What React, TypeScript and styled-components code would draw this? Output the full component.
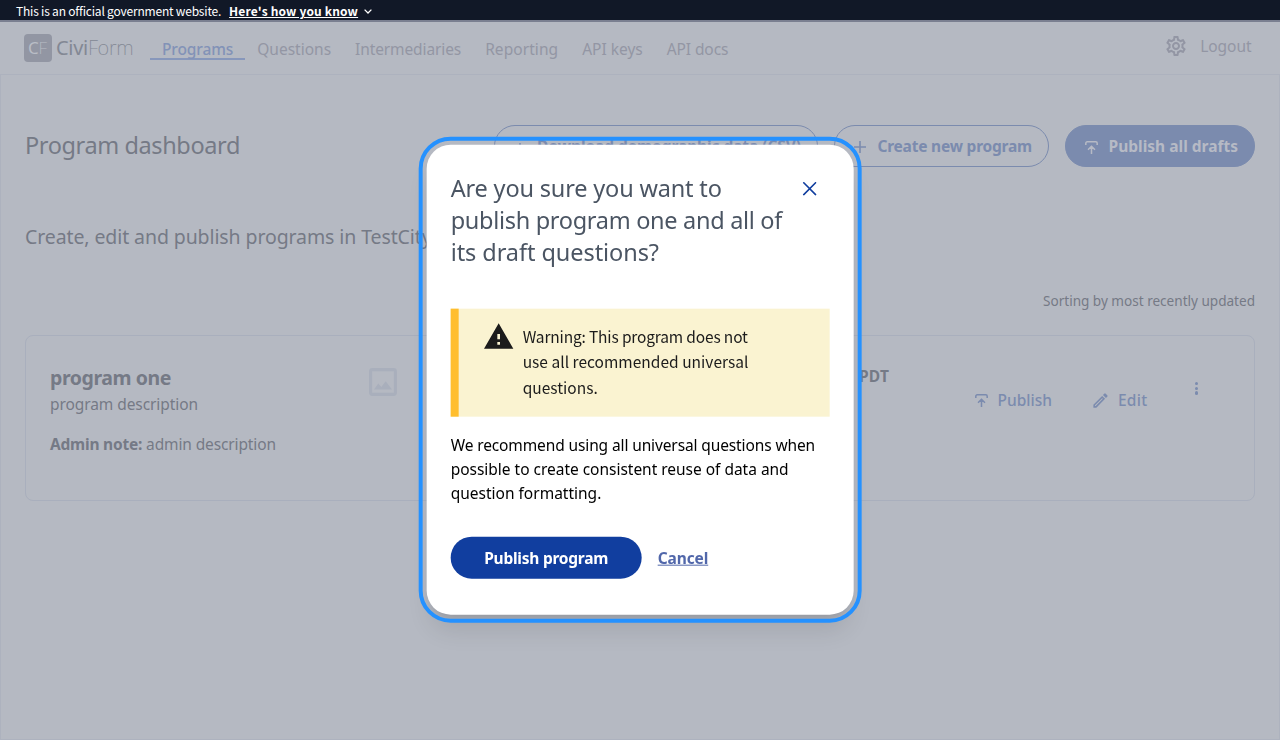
import React from 'react';
import styled, { createGlobalStyle } from 'styled-components';
import { MdOutlineEdit, MdOutlineSettings, MdWarning } from 'react-icons/md';

const GlobalStyle = createGlobalStyle`
  *, *::before, *::after { box-sizing: border-box; }
  body {
    margin: 0;
    background: #b5b9c2;
    font-family: 'Noto Sans', 'Open Sans', sans-serif;
    font-size: 15.5px;
    line-height: 24px;
  }
  h1, h2, h3, p { margin: 0; font-weight: 400; }
`;

const color = {
  muted: '#757a86',
  nav: '#9396a4',
  blue: '#7b8bae',
  line: '#a9afbd',
};

const Page = styled.div`
  display: flex;
  flex-direction: column;
  height: 740px;
  overflow: hidden;
`;

/* Letter spacing is tuned per string. */
const Text = styled.span<{ $ls?: number }>`
  letter-spacing: ${p => p.$ls ?? 0}px;
  white-space: nowrap;
`;

const Banner = styled.div`
  display: flex;
  align-items: center;
  height: 22px;
  padding: 2px 16px 0;
  border-bottom: 2px solid #7a7f90;
  background: #111827;
  color: #fff;
  font-family: 'Noto Sans CJK SC', sans-serif;
  font-size: 12px;
  line-height: 18px;
`;

const BannerLink = styled(Text)`
  margin: 0 6px 0 8px;
  font-weight: 700;
  text-decoration: underline;
  text-underline-offset: 1px;
  text-decoration-thickness: 1px;
`;

const Header = styled.header`
  display: flex;
  flex: none;
  height: 52px;
  padding: 0 28.5px 0 24px;
`;

const LogoMark = styled.div`
  width: 28px;
  height: 28px;
  margin-top: 12px;
  padding-left: 4px;
  border-radius: 4px;
  background: #9296a3;
  color: #b9bdc6;
  font-size: 17px;
  line-height: 28px;
  letter-spacing: -0.2px;
  white-space: nowrap;
`;

const LogoName = styled.div`
  width: 98px;
  margin-top: 12px;
  padding-left: 4px;
  color: #838894;
  font-size: 20px;
  line-height: 28px;
  white-space: nowrap;
`;

const Thin = styled.span<{ $weight: number; $ls: number }>`
  font-weight: ${p => p.$weight};
  letter-spacing: ${p => p.$ls}px;
`;

const Nav = styled.nav`
  display: flex;
  flex: 1;
  align-items: flex-start;
  padding-top: 18px;
`;

const NavItem = styled.a<{ $active?: boolean }>`
  height: 20px;
  padding: 0 12px;
  border-bottom: 2px solid ${p => (p.$active ? '#8797bb' : 'transparent')};
  color: ${p => (p.$active ? '#8292b7' : color.nav)};
  font-weight: ${p => (p.$active ? 500 : 400)};
  line-height: 18px;
`;

const HeaderTools = styled.div`
  display: flex;
  align-items: center;
  gap: 12px;
  height: 24px;
  margin-top: 12px;
  color: ${color.nav};
`;

const Main = styled.main`
  flex: 1;
  padding: 50px 24px 0;
  border: 1px solid #adb2be;
  color: ${color.muted};
`;

const TitleRow = styled.div`
  display: flex;
  align-items: center;
  gap: 16px;
`;

const PageTitle = styled.h1`
  flex: 1;
  height: 42px;
  font-size: 23.5px;
  line-height: 40px;
`;

const PillButton = styled.button<{ $filled?: boolean; $width: number }>`
  display: flex;
  align-items: center;
  justify-content: space-between;
  width: ${p => p.$width}px;
  height: 42px;
  padding: 0 16px;
  border: 1px solid ${color.blue};
  border-radius: 21px;
  background: ${p => (p.$filled ? color.blue : 'transparent')};
  color: ${p => (p.$filled ? '#b6bac5' : color.blue)};
  font: inherit;
  font-weight: 700;
`;

const IconBox = styled.span`
  display: flex;
  justify-content: center;
  width: 18px;
  padding-top: 2px;
`;

const Subtitle = styled.h2`
  margin-top: 56px;
  font-size: 19.5px;
  line-height: 28px;
`;

const SortNote = styled.p`
  margin-top: 40px;
  font-size: 13.6px;
  line-height: 20px;
  text-align: right;
`;

const Card = styled.section`
  display: flex;
  align-items: flex-start;
  height: 166px;
  margin-top: 24px;
  padding: 27px 24px 0;
  border: 1px solid ${color.line};
  border-radius: 8px;
`;

const CardText = styled.div`
  width: 319px;
  padding-top: 1px;
`;

const CardTitle = styled.h3`
  font-size: 19.5px;
  font-weight: 700;
  line-height: 28px;
`;

const Note = styled.p`
  margin-top: 16px;
`;

const Thumb = styled.div`
  height: 28px;
  margin-top: 5px;
`;

const Updated = styled.div`
  width: 492px;
  margin-top: 1px;
  font-weight: 700;
  text-align: right;
`;

const Actions = styled.div`
  display: flex;
  align-items: center;
  gap: 39.5px;
  margin: 25px 0 0 85.5px;
`;

const Action = styled.a<{ $gap: number }>`
  display: flex;
  align-items: center;
  gap: ${p => p.$gap}px;
  color: ${color.blue};
  font-weight: 500;
`;

const More = styled.div`
  display: flex;
  flex-direction: column;
  gap: 1.5px;
  margin: 19px 0 0 47.5px;
`;

const Dot = styled.span`
  width: 3.2px;
  height: 3.2px;
  border-radius: 50%;
  background: ${color.blue};
`;

const Overlay = styled.div`
  position: fixed;
  inset: 0;
  display: flex;
  justify-content: center;
  align-items: flex-start;
  padding: 145px 0 0 1px;
`;

const Dialog = styled.div`
  width: 427px;
  height: 470px;
  padding: 27px 24px 0;
  border-radius: 24px;
  outline: 4px solid #2491ff;
  outline-offset: 4px;
  background: #fff;
  box-shadow: 0 20px 25px -5px rgba(0, 0, 0, 0.1), 0 8px 10px -6px rgba(0, 0, 0, 0.1);
  transform: translate(-0.33px, -0.33px);
`;

const DialogHead = styled.div`
  display: flex;
  justify-content: space-between;
  padding-right: 13px;
`;

const DialogTitle = styled.h2`
  display: flex;
  flex-direction: column;
  color: #4b5563;
  font-size: 23.5px;
  line-height: 32px;
`;

const Close = styled.svg`
  width: 14px;
  height: 14px;
  margin-top: 10px;
`;

const Alert = styled.div`
  display: flex;
  gap: 8px;
  height: 108px;
  margin-top: 41px;
  padding: 15px 24px 0;
  border-left: 8px solid #ffbe2e;
  background: #faf3d1;
  color: #1b1b1b;
`;

const AlertIcon = styled(MdWarning)`
  flex: none;
  width: 32px;
  height: 32px;
  margin-top: -3px;
`;

const AlertText = styled.p`
  display: flex;
  flex-direction: column;
  font-family: 'Noto Sans CJK SC', sans-serif;
  line-height: 25.4px;
`;

const Body = styled.p`
  display: flex;
  flex-direction: column;
  margin-top: 16px;
  color: #000;
`;

const DialogActions = styled.div`
  display: flex;
  align-items: center;
  gap: 16px;
  margin-top: 32px;
`;

const Primary = styled.button`
  width: 191px;
  height: 42px;
  padding: 0;
  border: 0;
  border-radius: 21px;
  background: #113e9f;
  color: #fff;
  font: inherit;
  font-weight: 700;
`;

const Cancel = styled.a`
  color: #5167aa;
  font-weight: 700;
  text-decoration: underline;
  text-underline-offset: 1px;
  text-decoration-thickness: 1px;
`;

const PublishIcon = () => (
  <svg width="13" height="13" viewBox="0 0 12 12" fill="none" stroke="currentColor" strokeWidth="1.4">
    <path d="M.75 3.7V2A1.25 1.25 0 0 1 2 .75h8A1.25 1.25 0 0 1 11.25 2v1.7M6 12V5M2.8 8.1 6 4.9l3.2 3.2" />
  </svg>
);

const PlusIcon = () => (
  <svg width="12" height="12" viewBox="0 0 12 12" stroke="currentColor" strokeWidth="1.6">
    <path d="M6 0v12M0 6h12" />
  </svg>
);

const DownloadIcon = () => (
  <svg width="12" height="12" viewBox="0 0 12 12" fill="none" stroke="currentColor" strokeWidth="1.5">
    <path d="M6 2v6M3.5 5.5 6 8l2.5-2.5M.75 8.5v2.75h10.5V8.5" />
  </svg>
);

const ImageIcon = () => (
  <svg width="28" height="28" viewBox="0 0 28 28" fill="none">
    <rect x="1.6" y="1.6" width="24.8" height="24.8" rx="1.8" stroke="#a9afbc" strokeWidth="3.1" />
    <path d="M5 21.5 9.3 15.4l3 3.6 4.4-5.7 6.3 8.2Z" fill="#a9afbc" />
  </svg>
);

const ChevronIcon = () => (
  <svg width="8" height="5" viewBox="0 0 8 5" fill="none" stroke="#fff" strokeWidth="1.3">
    <path d="M.6.6 4 4 7.4.6" />
  </svg>
);

export default function App() {
  return (
    <Page>
      <GlobalStyle />
      <Banner>
        <Text $ls={-0.2}>This is an official government website.</Text>
        <BannerLink $ls={0.16}>Here's how you know</BannerLink>
        <ChevronIcon />
      </Banner>

      <Header>
        <LogoMark>
          C<Thin $weight={200} $ls={0}>F</Thin>
        </LogoMark>
        <LogoName>
          <Thin $weight={400} $ls={-0.3}>Civi</Thin>
          <Thin $weight={200} $ls={-0.3}>Form</Thin>
        </LogoName>
        <Nav>
          <NavItem $active><Text $ls={-0.11}>Programs</Text></NavItem>
          <NavItem><Text $ls={0}>Questions</Text></NavItem>
          <NavItem><Text $ls={-0.11}>Intermediaries</Text></NavItem>
          <NavItem><Text $ls={0.07}>Reporting</Text></NavItem>
          <NavItem><Text>API keys</Text></NavItem>
          <NavItem><Text $ls={-0.1}>API docs</Text></NavItem>
        </Nav>
        <HeaderTools>
          <MdOutlineSettings size={24} />
          <Text $ls={-0.05}>Logout</Text>
        </HeaderTools>
      </Header>

      <Main>
        <TitleRow>
          <PageTitle><Text $ls={-0.39}>Program dashboard</Text></PageTitle>
          <PillButton $width={324}>
            <IconBox><DownloadIcon /></IconBox>
            <Text $ls={-0.06}>Download demographic data (CSV)</Text>
          </PillButton>
          <PillButton $width={215}>
            <IconBox><PlusIcon /></IconBox>
            <Text $ls={-0.21}>Create new program</Text>
          </PillButton>
          <PillButton $width={190} $filled>
            <IconBox><PublishIcon /></IconBox>
            <Text>Publish all drafts</Text>
          </PillButton>
        </TitleRow>
        <Subtitle><Text $ls={-0.1}>Create, edit and publish programs in TestCity</Text></Subtitle>
        <SortNote><Text $ls={-0.02}>Sorting by most recently updated</Text></SortNote>

        <Card>
          <CardText>
            <CardTitle><Text $ls={-0.43}>program one</Text></CardTitle>
            <p><Text $ls={-0.08}>program description</Text></p>
            <Note>
              <Text as="b" $ls={-0.22}>Admin note:</Text> <Text $ls={-0.13}>admin description</Text>
            </Note>
          </CardText>
          <Thumb><ImageIcon /></Thumb>
          <Updated><Text $ls={0.15}>PDT</Text></Updated>
          <Actions>
            <Action $gap={10}><PublishIcon /><Text>Publish</Text></Action>
            <Action $gap={7.5}><MdOutlineEdit size={19} /><Text $ls={0.28}>Edit</Text></Action>
          </Actions>
          <More><Dot /><Dot /><Dot /></More>
        </Card>
      </Main>

      <Overlay>
        <Dialog role="dialog">
          <DialogHead>
            <DialogTitle>
              <Text $ls={-0.17}>Are you sure you want to</Text>
              <Text $ls={-0.3}>publish program one and all of</Text>
              <Text $ls={-0.07}>its draft questions?</Text>
            </DialogTitle>
            <Close viewBox="0 0 14 14" stroke="#113e9f" strokeWidth="1.6">
              <path d="M.6.6l12.8 12.8M13.4.6.6 13.4" />
            </Close>
          </DialogHead>
          <Alert>
            <AlertIcon />
            <AlertText>
              <Text $ls={-0.16}>Warning: This program does not</Text>
              <Text $ls={0.02}>use all recommended universal</Text>
              <Text>questions.</Text>
            </AlertText>
          </Alert>
          <Body>
            <Text $ls={-0.12}>We recommend using all universal questions when</Text>
            <Text $ls={-0.02}>possible to create consistent reuse of data and</Text>
            <Text>question formatting.</Text>
          </Body>
          <DialogActions>
            <Primary><Text $ls={-0.24}>Publish program</Text></Primary>
            <Cancel><Text $ls={-0.11}>Cancel</Text></Cancel>
          </DialogActions>
        </Dialog>
      </Overlay>
    </Page>
  );
}
